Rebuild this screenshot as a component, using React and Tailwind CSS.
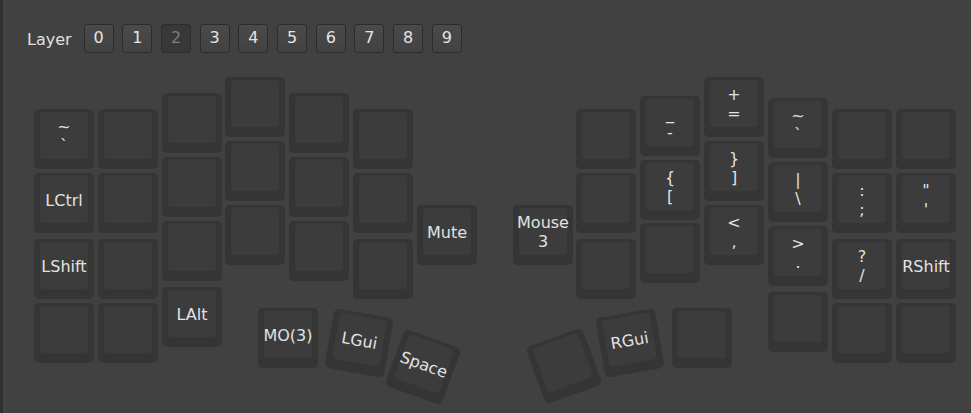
import React from "react";

const layers = ["0", "1", "2", "3", "4", "5", "6", "7", "8", "9"];
const activeLayer = "2";

// key positions in px on the canvas, rot in degrees around the key centre
const keys = [
  // left half
  { x: 34, y: 109, l: ["~", "`"] },
  { x: 34, y: 173, l: ["LCtrl"] },
  { x: 34, y: 239, l: ["LShift"] },
  { x: 34, y: 303 },
  { x: 98, y: 109 },
  { x: 98, y: 173 },
  { x: 98, y: 239 },
  { x: 98, y: 303 },
  { x: 162, y: 93 },
  { x: 162, y: 157 },
  { x: 162, y: 221 },
  { x: 162, y: 287, l: ["LAlt"] },
  { x: 225, y: 77 },
  { x: 225, y: 141 },
  { x: 225, y: 205 },
  { x: 289, y: 93 },
  { x: 289, y: 157 },
  { x: 289, y: 221 },
  { x: 353, y: 109 },
  { x: 353, y: 173 },
  { x: 353, y: 239 },
  { x: 417, y: 205, l: ["Mute"] },
  { x: 258, y: 308, l: ["MO(3)"] },
  { x: 329, y: 313, rot: 10, l: ["LGui"] },
  { x: 393, y: 337, rot: 20, l: ["Space"] },

  // right half
  { x: 513, y: 205, l: ["Mouse", "3"] },
  { x: 576, y: 109 },
  { x: 576, y: 173 },
  { x: 576, y: 239 },
  { x: 640, y: 96, l: ["_", "-"] },
  { x: 640, y: 160, l: ["{", "["] },
  { x: 640, y: 223 },
  { x: 704, y: 77, l: ["+", "="] },
  { x: 704, y: 141, l: ["}", "]"] },
  { x: 704, y: 205, l: ["<", ","] },
  { x: 768, y: 98, l: ["~", "`"] },
  { x: 768, y: 162, l: ["|", "\\"] },
  { x: 768, y: 226, l: [">", "."] },
  { x: 768, y: 292 },
  { x: 832, y: 109 },
  { x: 832, y: 173, l: [":", ";"] },
  { x: 832, y: 239, l: ["?", "/"] },
  { x: 832, y: 303 },
  { x: 896, y: 109 },
  { x: 896, y: 173, l: ['"', "'"] },
  { x: 896, y: 239, l: ["RShift"] },
  { x: 896, y: 303 },
  { x: 534, y: 336, rot: -20 },
  { x: 600, y: 313, rot: -10, l: ["RGui"] },
  { x: 672, y: 308 },
];

function Key({ x, y, rot = 0, l = [] }) {
  return (
    <div
      className="absolute w-[60px] h-[60px] rounded-[5px] bg-[#353535]"
      style={{ left: x, top: y, transform: `rotate(${rot}deg)` }}
    >
      <div
        className={
          l.length === 1
            ? "absolute left-[6px] top-[3px] w-[48px] h-[47px] pt-[2px] rounded-[4px] bg-[#3c3c3c] flex flex-col items-center justify-center text-[16px] leading-[19px] text-[#e2e2e2] whitespace-nowrap"
            : "absolute left-[6px] top-[3px] w-[48px] h-[47px] rounded-[4px] bg-[#3c3c3c] flex flex-col items-center justify-center text-[16px] leading-[19px] text-[#e2e2e2] whitespace-nowrap"
        }
      >
        {l.map((t, i) => (
          <span key={i}>{t}</span>
        ))}
      </div>
    </div>
  );
}

export default function App() {
  return (
    <div
      className="relative w-[971px] h-[413px] overflow-hidden bg-[#414141] text-[#dedede]"
      style={{ fontFamily: '"DejaVu Sans", Verdana, sans-serif' }}
    >
      {/* left frame edge */}
      <div className="absolute left-0 top-0 h-full w-[3px] bg-[#303030]" />
      <div className="absolute left-[4px] top-0 h-full w-px bg-[#474747]" />

      {/* layer selector */}
      <div className="flex items-center pt-[22px] pl-[27px]">
        <span className="pt-[3px] text-[16px] leading-[29px] text-[#e0e0e0]">Layer</span>
        <div className="ml-[12px] flex gap-[8.7px]">
          {layers.map((n) => (
            <button
              key={n}
              type="button"
              className={
                n === activeLayer
                  ? "w-[30px] h-[29px] rounded-[3px] border border-[#2c2c2c] bg-[#383838] text-[16px] leading-none text-[#7e7e7e]"
                  : "w-[30px] h-[29px] rounded-[3px] border border-[#2c2c2c] bg-gradient-to-b from-[#4a4a4a] to-[#424242] text-[16px] leading-none text-[#e4e4e4]"
              }
            >
              {n}
            </button>
          ))}
        </div>
      </div>

      {/* keyboard canvas */}
      {keys.map((k, i) => (
        <Key key={i} {...k} />
      ))}
    </div>
  );
}
